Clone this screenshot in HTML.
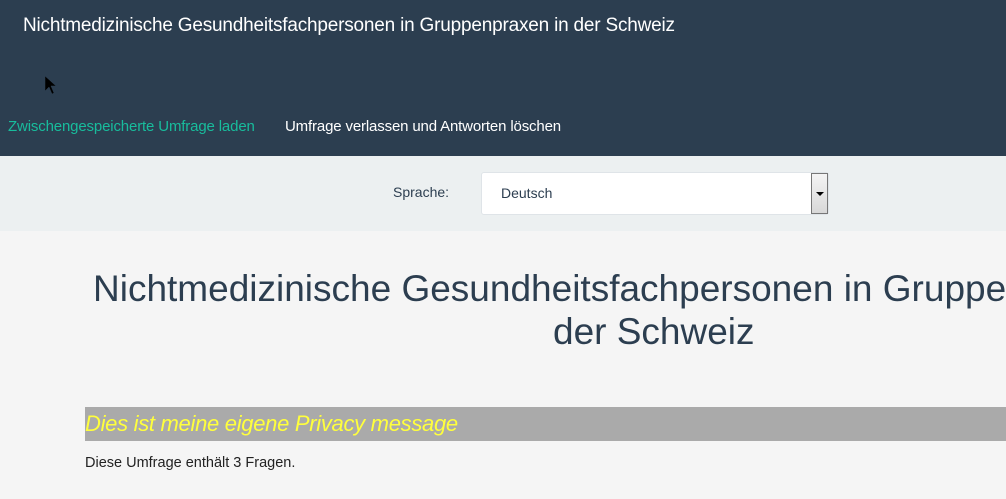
<!DOCTYPE html>
<html><head><meta charset="utf-8"><style>
*{margin:0;padding:0;box-sizing:border-box}
html,body{width:1006px;height:499px;overflow:hidden}
body{background:#f5f5f5;font-family:"Liberation Sans",sans-serif;position:relative}
.wrap{position:absolute;left:0;top:0;width:1006px;height:499px;overflow:hidden}
.hdr{position:absolute;left:0;top:0;width:1006px;height:156px;background:#2c3e50}
.abs{position:absolute;white-space:nowrap}
.lang{position:absolute;left:0;top:156px;width:1006px;height:75px;background:#ecf0f1}
</style></head><body><div class="wrap">
<div class="hdr"></div>
<div class="abs" style="left:23px;top:15px;font-size:19px;color:#fff;letter-spacing:-0.2px">Nichtmedizinische Gesundheitsfachpersonen in Gruppenpraxen in der Schweiz</div>
<svg class="abs" style="left:44px;top:75px" width="14" height="22" viewBox="0 0 14 22"><path d="M1 1 L1 16 L5 12 L8 19 L10 18 L7 11 L12 11 Z" fill="#000" stroke="#2c3e50" stroke-width="0.5"/></svg>
<div class="abs" style="left:8px;top:118px;font-size:15px;color:#18bc9c;letter-spacing:-0.15px">Zwischengespeicherte Umfrage laden</div>
<div class="abs" style="left:285px;top:118px;font-size:15px;color:#fff;letter-spacing:-0.15px">Umfrage verlassen und Antworten löschen</div>
<div class="lang"></div>
<div class="abs" style="left:393px;top:184px;font-size:14px;color:#2c3e50">Sprache:</div>
<div class="abs" style="left:481px;top:172px;width:348px;height:43px;background:#fff;border:1px solid #dfe4e8;border-radius:3px"></div>
<div class="abs" style="left:501px;top:185px;font-size:14px;color:#2c3e50">Deutsch</div>
<div class="abs" style="left:811px;top:173px;width:17px;height:41px;background:linear-gradient(#f4f4f4,#d8d8d8);border:1px solid #777"></div>
<div class="abs" style="left:816px;top:192px;width:0;height:0;border-left:4px solid transparent;border-right:4px solid transparent;border-top:4px solid #000"></div>
<div class="abs" style="left:93px;top:268px;font-size:37px;color:#2c3e50;letter-spacing:0px">Nichtmedizinische Gesundheitsfachpersonen in Gruppenpraxen in</div>
<div class="abs" style="left:553px;top:311px;font-size:37px;color:#2c3e50;letter-spacing:0px">der Schweiz</div>
<div class="abs" style="left:85px;top:407px;width:921px;height:34px;background:#aaaaaa"></div>
<div class="abs" style="left:85px;top:411px;font-size:22px;font-style:italic;color:#ffff3c;letter-spacing:-0.3px">Dies ist meine eigene Privacy message</div>
<div class="abs" style="left:85px;top:455px;font-size:14.5px;color:#222">Diese Umfrage enthält 3 Fragen.</div>
</div></body></html>
